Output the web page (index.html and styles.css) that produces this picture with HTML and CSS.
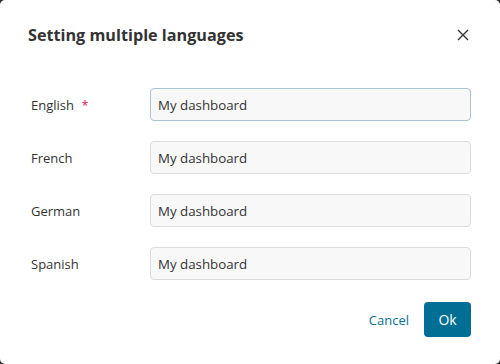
FILE: index.html
```html
<!DOCTYPE html>
<html>
<head>
<meta charset="utf-8">
<link rel="stylesheet" href="styles.css">
</head>
<body>
<div class="dialog">
  <div class="header">
    <h1 class="title">Setting multiple languages</h1>
    <button class="close" aria-label="Close">
      <svg width="12" height="12" viewBox="0 0 12 12"><path d="M1 1L11 11M11 1L1 11" stroke="#333" stroke-width="1.4" fill="none"/></svg>
    </button>
  </div>
  <div class="rows">
    <div class="row">
      <label class="label">English <span class="req">*</span></label>
      <div class="input focused">My dashboard</div>
    </div>
    <div class="row">
      <label class="label">French</label>
      <div class="input">My dashboard</div>
    </div>
    <div class="row">
      <label class="label">German</label>
      <div class="input">My dashboard</div>
    </div>
    <div class="row">
      <label class="label">Spanish</label>
      <div class="input">My dashboard</div>
    </div>
  </div>
  <div class="footer">
    <button class="cancel">Cancel</button>
    <button class="ok">Ok</button>
  </div>
</div>
</body>
</html>
```
FILE: styles.css
```css
html, body {
  margin: 0;
  padding: 0;
  background: #2b2b2b;
}
body {
  width: 500px;
  height: 364px;
  font-family: "Open Sans", "Noto Sans", sans-serif;
  color: #333;
}
.dialog {
  width: 500px;
  height: 364px;
  box-sizing: border-box;
  background: #fff;
  border-radius: 5px;
  padding: 0 29px 0 31px;
  display: flex;
  flex-direction: column;
}
.header {
  display: flex;
  align-items: center;
  justify-content: space-between;
  height: 70px;
  margin-left: -3px;
}
.title {
  margin: 0;
  font-size: 16.2px;
  font-weight: 700;
  color: #333;
}
.close {
  border: 0;
  background: none;
  padding: 0;
  width: 12px;
  height: 12px;
  margin-right: 2px;
  display: flex;
}
.rows {
  margin-top: 18px;
  display: flex;
  flex-direction: column;
  gap: 20px;
}
.row {
  display: flex;
  align-items: center;
}
.label {
  width: 119px;
  font-size: 13px;
  color: #333;
}
.req {
  color: #e0245e;
  margin-left: 4px;
}
.input {
  flex: 1;
  height: 33px;
  box-sizing: border-box;
  border: 1px solid #dcdcdc;
  background: #f8f8f8;
  border-radius: 4px;
  padding: 0 7px;
  display: flex;
  align-items: center;
  font-size: 13.3px;
  color: #333;
}
.input.focused {
  border-color: #a9c3d1;
}
.footer {
  margin-top: 22px;
  display: flex;
  justify-content: flex-end;
  align-items: center;
  gap: 15px;
}
.cancel {
  border: 0;
  background: none;
  font-family: inherit;
  font-size: 13px;
  color: #0b6e8f;
  padding: 0;
  cursor: pointer;
}
.ok {
  border: 0;
  background: #006f93;
  color: #fff;
  font-family: inherit;
  font-size: 14px;
  width: 47px;
  height: 35px;
  border-radius: 4px;
  cursor: pointer;
}
```
